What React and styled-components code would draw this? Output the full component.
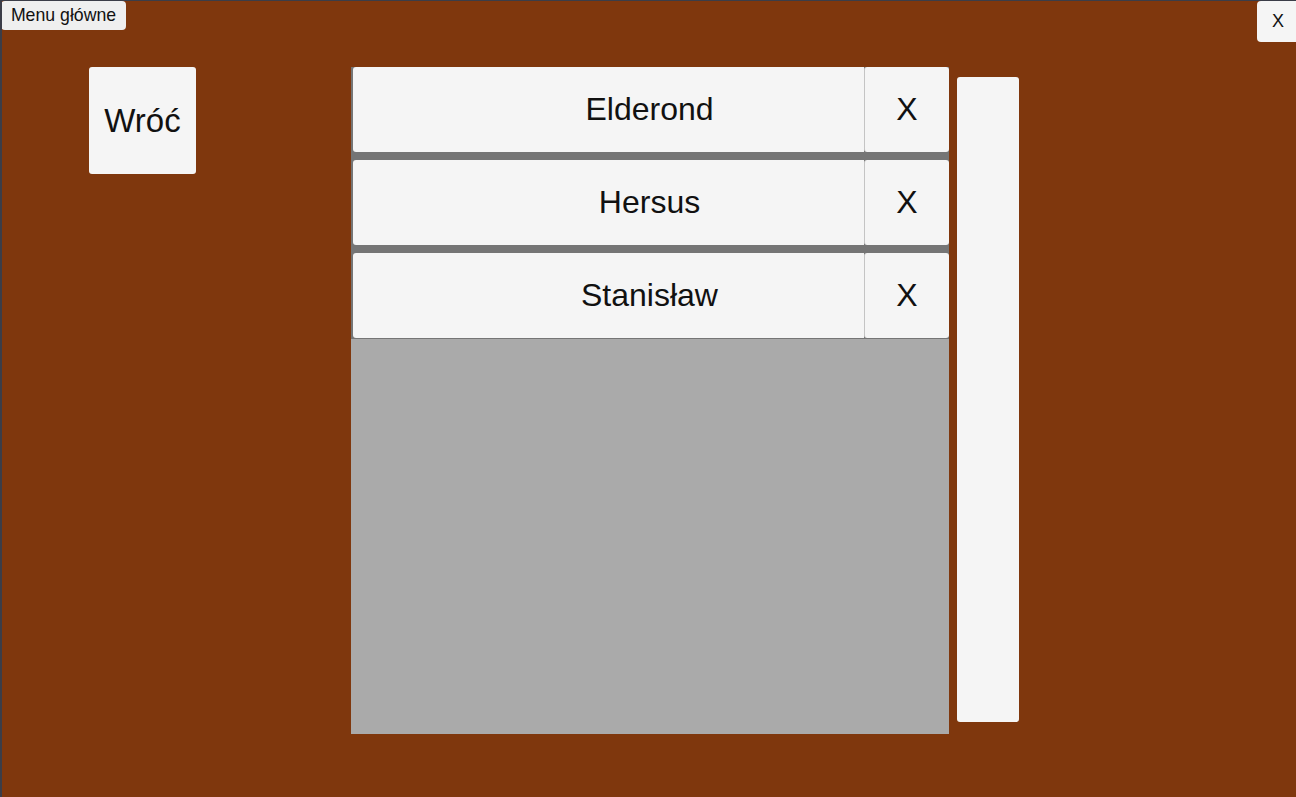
import React from "react";
import styled, { createGlobalStyle } from "styled-components";

const Global = createGlobalStyle`
  html, body { margin: 0; padding: 0; }
  body { font-family: "Liberation Sans", Arial, sans-serif; }
  * { box-sizing: border-box; }
`;

const Page = styled.div`
  width: 1296px;
  height: 797px;
  background: #7f370d;
  border-left: 2px solid #3b3d48;
  border-top: 1px solid #3b3d48;
  display: flex;
  flex-direction: column;
  overflow: hidden;
`;

const TopBar = styled.div`
  display: flex;
  justify-content: space-between;
  align-items: flex-start;
  height: 41px;
`;

const MenuButton = styled.button`
  margin-left: -1px;
  width: 125px;
  height: 29px;
  padding: 0;
  border: none;
  border-radius: 4px;
  background: #efefef;
  color: #111;
  font-family: "Liberation Sans", Arial, sans-serif;
  font-size: 17.7px;
  display: flex;
  align-items: center;
  justify-content: center;
`;

const CloseButton = styled.button`
  width: 39px;
  height: 41px;
  padding: 0 0 0 3px;
  border: none;
  border-radius: 4px 0 0 4px;
  background: #f5f5f5;
  color: #111;
  font-family: "Liberation Sans", Arial, sans-serif;
  font-size: 18px;
  display: flex;
  align-items: center;
  justify-content: center;
`;

const Content = styled.div`
  display: flex;
  align-items: flex-start;
  padding-left: 87px;
  margin-top: 25px;
`;

const BackButton = styled.button`
  width: 107px;
  height: 107px;
  padding: 0;
  border: none;
  border-radius: 3px;
  background: #f5f5f5;
  color: #111;
  font-family: "Liberation Sans", Arial, sans-serif;
  font-size: 33px;
  display: flex;
  align-items: center;
  justify-content: center;
`;

const ListPanel = styled.div`
  margin-left: 155px;
  width: 598px;
  height: 667px;
  background: #aaaaaa;
`;

const RowList = styled.div`
  display: flex;
  flex-direction: column;
  gap: 8px;
  background: #757575;
  padding-left: 2px;
  padding-bottom: 1px;
`;

const Row = styled.div`
  display: flex;
  height: 85px;
`;

const NameButton = styled.button`
  flex: 1;
  height: 100%;
  border: none;
  border-radius: 3px 0 0 3px;
  background: #f5f5f5;
  color: #111;
  font-family: "Liberation Sans", Arial, sans-serif;
  font-size: 32px;
  display: flex;
  align-items: center;
  justify-content: center;
  padding: 0 0 0 82px;
`;

const RemoveButton = styled.button`
  width: 85px;
  height: 100%;
  padding: 0;
  border: none;
  border-left: 1px solid #c4c4c4;
  border-radius: 3px;
  background: #f5f5f5;
  color: #111;
  font-family: "Liberation Sans", Arial, sans-serif;
  font-size: 32px;
  display: flex;
  align-items: center;
  justify-content: center;
`;

const Scrollbar = styled.div`
  margin-left: 8px;
  margin-top: 10px;
  width: 62px;
  height: 645px;
  border-radius: 3px;
  background: #f5f5f5;
`;

const names = ["Elderond", "Hersus", "Stanisław"];

export default function App() {
  return (
    <>
      <Global />
      <Page>
        <TopBar>
          <MenuButton>Menu główne</MenuButton>
          <CloseButton>X</CloseButton>
        </TopBar>
        <Content>
          <BackButton>Wróć</BackButton>
          <ListPanel>
            <RowList>
              {names.map((n) => (
                <Row key={n}>
                  <NameButton>{n}</NameButton>
                  <RemoveButton>X</RemoveButton>
                </Row>
              ))}
            </RowList>
          </ListPanel>
          <Scrollbar />
        </Content>
      </Page>
    </>
  );
}
